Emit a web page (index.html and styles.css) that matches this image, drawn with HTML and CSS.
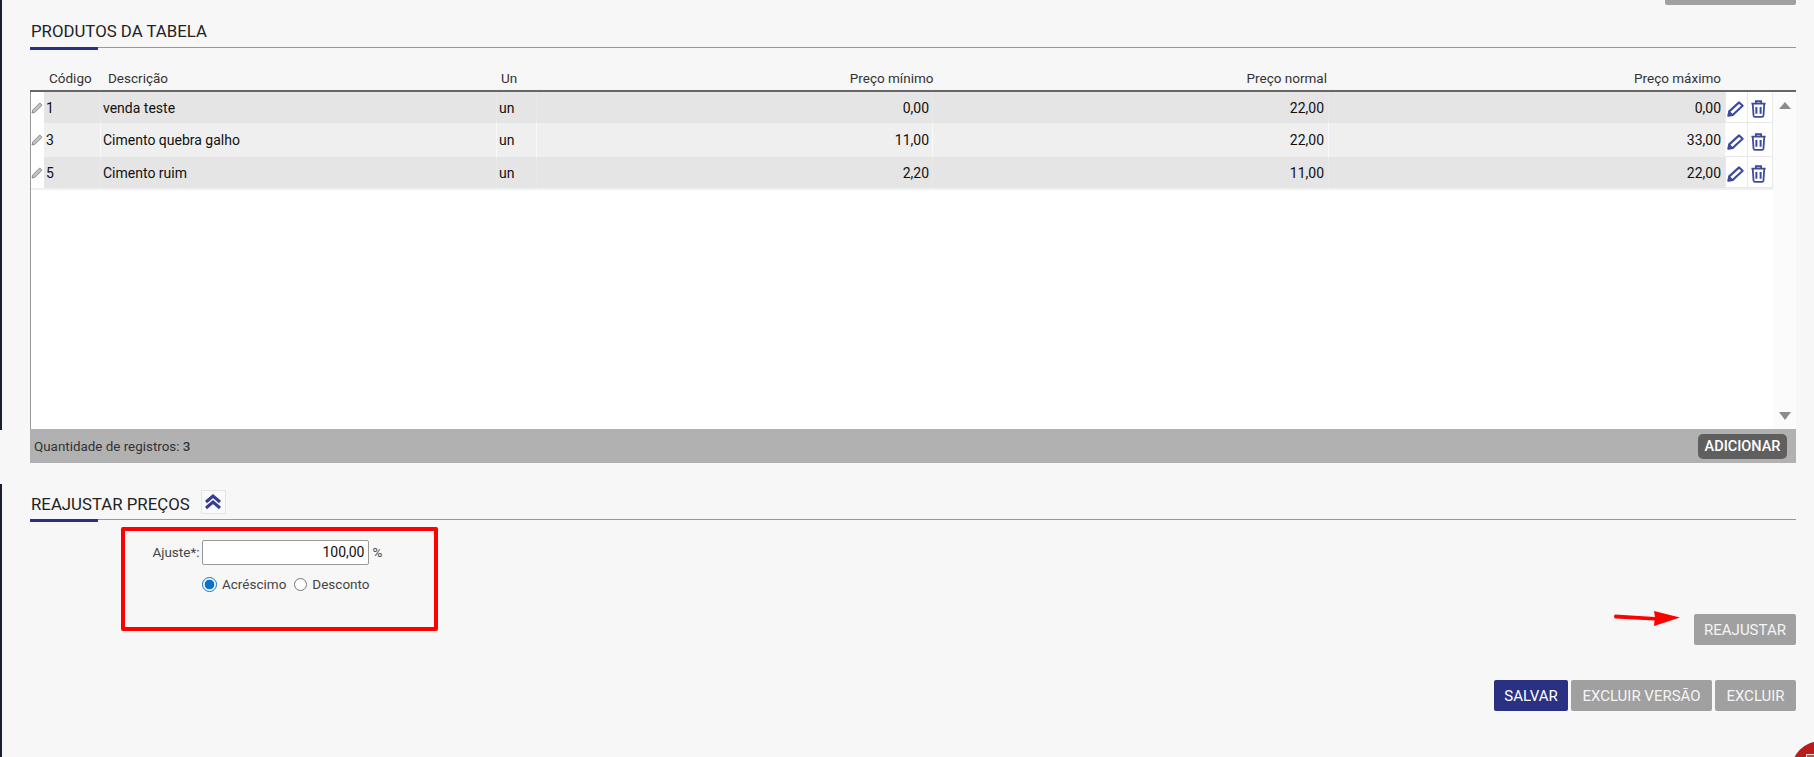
FILE: index.html
```html
<!DOCTYPE html>
<html lang="pt-BR">
<head>
<meta charset="utf-8">
<title>Produtos da tabela</title>
<link rel="stylesheet" href="styles.css">
</head>
<body>
<svg width="0" height="0" class="defs">
  <symbol id="i-pencil" viewBox="0 0 16 15"><path d="M11.400 1.300 14.700 4.400 5.600 13 1.300 13.800 2.100 9.700Z" fill="none" stroke="currentColor" stroke-width="2" stroke-linejoin="round"/><path d="M2 9.800 5.400 13 1.300 13.800Z" fill="currentColor" stroke="currentColor" stroke-width="1"/></symbol>
  <symbol id="i-trash" viewBox="0 0 14 17"><path d="M0.300 3.500H13.700M4.500 3.300V1.200H9.500V3.300M1.600 4 2.300 14.600Q2.400 16 3.800 16H10.200Q11.600 16 11.700 14.600L12.400 4" fill="none" stroke="currentColor" stroke-width="1.700"/><path d="M5 6.500V13M9 6.500V13" stroke="currentColor" stroke-width="1.900"/></symbol>
  <symbol id="i-grip" viewBox="0 0 12 12"><path d="M8.800 1 11 3.200 4 10.200 1 11 1.800 8Z" fill="#c4c4c4" stroke="#8a8a8a" stroke-width="1"/></symbol>
</svg>
<span class="edge edge-top"></span>
<span class="edge edge-bottom"></span>
<main class="page">
  <div class="top-btn"></div>
  <h2 class="section-head first"><span>PRODUTOS DA TABELA</span></h2>
  <div class="grid-head">
    <span class="h-code">Código</span>
    <span class="h-desc">Descrição</span>
    <span class="h-un">Un</span>
    <span class="h-num">Preço mínimo</span>
    <span class="h-num">Preço normal</span>
    <span class="h-num">Preço máximo</span>
  </div>
  <div class="grid-body">
    <div class="rows">
      <div class="row odd">
        <span class="c-grip"><svg class="grip"><use href="#i-grip"/></svg></span><span class="c-code">1</span><span class="c-desc">venda teste</span><span class="c-un">un</span><span class="c-num min">0,00</span><span class="c-num">22,00</span><span class="c-num">0,00</span>
        <span class="c-act edit"><svg class="act-pencil"><use href="#i-pencil"/></svg></span><span class="c-act del"><svg class="act-trash"><use href="#i-trash"/></svg></span>
      </div>
      <div class="row even">
        <span class="c-grip"><svg class="grip"><use href="#i-grip"/></svg></span><span class="c-code">3</span><span class="c-desc">Cimento quebra galho</span><span class="c-un">un</span><span class="c-num min">11,00</span><span class="c-num">22,00</span><span class="c-num">33,00</span>
        <span class="c-act edit"><svg class="act-pencil"><use href="#i-pencil"/></svg></span><span class="c-act del"><svg class="act-trash"><use href="#i-trash"/></svg></span>
      </div>
      <div class="row odd">
        <span class="c-grip"><svg class="grip"><use href="#i-grip"/></svg></span><span class="c-code">5</span><span class="c-desc">Cimento ruim</span><span class="c-un">un</span><span class="c-num min">2,20</span><span class="c-num">11,00</span><span class="c-num">22,00</span>
        <span class="c-act edit"><svg class="act-pencil"><use href="#i-pencil"/></svg></span><span class="c-act del"><svg class="act-trash"><use href="#i-trash"/></svg></span>
      </div>
    </div>
    <div class="scroll"><i class="arrow up"></i><i class="arrow down"></i></div>
  </div>
  <div class="grid-foot">
    <span>Quantidade de registros: <b>3</b></span>
    <button class="btn-add" type="button">ADICIONAR</button>
  </div>
  <h2 class="section-head second">
    <span>REAJUSTAR PREÇOS</span>
    <span class="collapse"><svg width="18" height="16" viewBox="0 0 18 16"><path d="M2 8 9 2 16 8M2 14 9 8 16 14" fill="none" stroke="#343d92" stroke-width="3"/></svg></span>
  </h2>
  <div class="adjust-wrap">
    <div class="adjust">
      <div class="adjust-line">
        <label class="adjust-label" for="aj">Ajuste*:</label>
        <input class="adjust-input" id="aj" value="100,00">
        <span class="pct">%</span>
      </div>
      <div class="radios">
        <i class="radio on"></i><span>Acréscimo</span>
        <i class="radio"></i><span>Desconto</span>
      </div>
    </div>
    <div class="adjust-action">
      <svg class="red-arrow" width="68" height="16" viewBox="0 0 68 16"><path d="M2 3.500 42 6 41 0 67 6.500 41 15 41.500 9.500 2 7.500Q0 5.500 2 3.500Z" fill="#fe0000"/></svg>
      <button class="btn btn-gray btn-reajustar" type="button">REAJUSTAR</button>
    </div>
  </div>
  <div class="actions">
    <button class="btn btn-blue btn-salvar" type="button">SALVAR</button>
    <button class="btn btn-gray btn-versao" type="button">EXCLUIR VERSÃO</button>
    <button class="btn btn-gray btn-excluir" type="button">EXCLUIR</button>
  </div>
</main>
<span class="chat"></span>
</body>
</html>
```
FILE: styles.css
```css
html, body { margin: 0; height: 757px; overflow: hidden; }
body { background: #f7f7f7; font-family: Roboto, "Liberation Sans", sans-serif; color: #333; position: relative; }
.defs { position: absolute; }
.edge { position: absolute; left: 0; width: 2px; background: #1a2030; }
.edge-top { top: 0; height: 430px; }
.edge-bottom { top: 484px; bottom: 0; }
.page { margin-left: 30px; width: 1766px; display: flex; flex-direction: column; }
.top-btn { height: 5px; width: 131px; margin-left: auto; background: #a0a0a0; border-radius: 0 0 2px 2px; }
.section-head { position: relative; margin: 0; display: flex; font-size: 16.800px; font-weight: 400; color: #222; border-bottom: 1px solid #999; }
.section-head::after { content: ""; position: absolute; left: 0; bottom: -3px; width: 68px; height: 3.500px; background: #2a3183; }
.section-head.first { padding: 13px 0 3px; line-height: 26px; }
.section-head.second { margin-top: 27px; height: 29px; gap: 11px; }
.section-head span:first-child { padding-left: 1px; }
.section-head.second span:first-child { line-height: 28px; }
.grid-head { display: grid; grid-template-columns: 71px 396px 40px 396.500px 393.500px 394px; height: 42px; align-items: end; border-bottom: 2px solid #666; font-size: 13.500px; color: #333; }
.grid-head span { line-height: 24px; }
.h-code { padding-left: 19px; }
.h-desc { padding-left: 7px; }
.h-un { padding-left: 4px; }
.h-num { text-align: right; }
.grid-body { height: 337px; display: flex; background: #fff; border-left: 1px solid #999; }
.rows { width: 1742px; }
.row { display: grid; grid-template-columns: 13px 57px 396px 40px 396px 396px 397px 22px 25px; font-size: 14px; color: #111; }
.row:nth-child(1), .row:nth-child(3) { height: 31px; }
.row:nth-child(2) { height: 34px; }
.row > span { display: flex; align-items: center; }
.row:last-child { border-bottom: 2px solid #f0f0f0; }
.odd > span { background: #e5e5e5; box-shadow: inset -1px 0 0 rgba(255,255,255,.15); }
.even > span { background: #efefef; box-shadow: inset -1px 0 0 rgba(255,255,255,.6); }
.row > .c-grip { background: #fff; box-shadow: none; }
.row > .c-act { background: #fff; justify-content: center; box-shadow: inset -1px 0 0 #e8e8e8, inset 0 -1px 0 #e8e8e8; color: #3e4a9e; padding: 3px 4px 0 0; box-sizing: border-box; }
.c-code { padding-left: 2px; }
.c-desc { padding-left: 2px; }
.c-un { padding-left: 2px; }
.c-num { justify-content: flex-end; padding-right: 5px; }
.c-num.min { padding-right: 4px; }
.grip { width: 12px; height: 12px; }
.act-pencil { width: 17px; height: 16px; }
.act-trash { width: 15px; height: 18px; }
.scroll { flex: 1; background: #fbfbfb; display: flex; flex-direction: column; justify-content: space-between; align-items: center; padding: 10px 0 9px; }
.arrow { width: 0; height: 0; border-left: 6px solid transparent; border-right: 6px solid transparent; }
.arrow.up { border-bottom: 7px solid #8c8c8c; }
.arrow.down { border-top: 8px solid #8c8c8c; }
.grid-foot { height: 34px; background: #b1b1b1; display: flex; align-items: center; justify-content: space-between; padding: 0 9px 0 4px; font-size: 13.400px; color: #333; }
.grid-foot b { font-weight: 500; }
.btn-add { width: 89px; height: 25px; padding: 0; border: 0; border-radius: 5px; background: #5f5f5f; color: #fff; font: 500 14.500px Roboto, sans-serif; }
.collapse { width: 23px; height: 22px; display: flex; align-items: center; justify-content: center; background: #fafafa; border: 1px solid #e4e4e4; }
.adjust-wrap { display: flex; justify-content: space-between; align-items: flex-start; margin-top: 7px; }
.adjust { margin-left: 91px; width: 317px; height: 104px; box-sizing: border-box; border: 4.500px solid #fe0000; border-radius: 2px; font-size: 13.500px; color: #444; padding-top: 8.500px; }
.adjust-line { display: flex; align-items: center; }
.adjust-label { width: 74.500px; text-align: right; }
.adjust-input { width: 167px; height: 25px; box-sizing: border-box; margin-left: 2px; border: 1px solid #999; border-radius: 2px; background: #fff; text-align: right; padding: 0 3px; font: 14px Roboto, sans-serif; color: #111; outline: 0; }
.pct { margin-left: 4px; }
.radios { display: flex; align-items: center; margin: 11.500px 0 0 77px; gap: 5px; }
.radios span { margin-right: 3px; }
.radio { width: 11px; height: 11px; border: 1px solid #767676; border-radius: 50%; background: #fff; }
.radio.on { width: 13px; height: 13px; border-color: #0b72c9; background: radial-gradient(circle, #0b72c9 0 4.600px, #fff 5.200px); }
.adjust-action { display: flex; align-items: flex-start; margin-top: 87px; }
.red-arrow { margin: -3px 13px 0 0; }
.btn { height: 31px; padding: 0; border: 0; border-radius: 2px; color: #f4f4f4; font: 15px Roboto, sans-serif; }
.btn-gray { background: #a0a0a0; }
.btn-blue { background: #2a3183; color: #fff; }
.btn-reajustar { width: 102px; }
.btn-salvar { width: 74px; }
.btn-versao { width: 141px; }
.btn-excluir { width: 81px; }
.actions { display: flex; justify-content: flex-end; gap: 3px; margin-top: 35px; }
.chat { position: fixed; left: 1791px; top: 741px; width: 60px; height: 60px; border-radius: 50%; background: #b91c1c; }
.chat::after { content: ""; position: absolute; left: 15px; top: 13px; width: 16px; height: 10px; border: 1px solid #f3d6d6; background: #c94a4a; }
```
